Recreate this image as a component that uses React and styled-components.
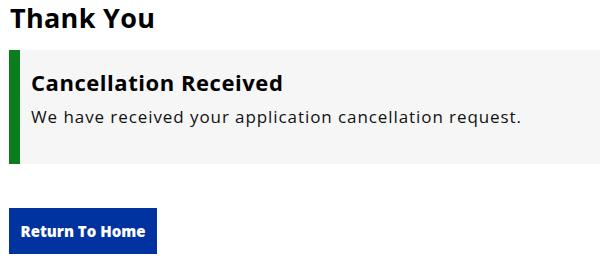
import React from "react";
import styled, { createGlobalStyle } from "styled-components";

const GlobalStyle = createGlobalStyle`
  body {
    margin: 0;
    background: #fff;
    font-family: "Open Sans", "Liberation Sans", sans-serif;
    color: #000;
  }
`;

const Page = styled.main`
  padding: 0 3px 0 9px;
`;

const Title = styled.h1`
  margin: 0;
  padding-top: 1px;
  font-size: 27px;
  line-height: 34px;
  font-weight: 700;
  letter-spacing: 0.3px;
  padding-left: 1px;
`;

const Notice = styled.section`
  margin-top: 15px;
  height: 114px;
  box-sizing: border-box;
  background: #f6f6f6;
  border-left: 11px solid #0b7d1f;
  padding: 18px 0 0 11px;
`;

const NoticeHeading = styled.h2`
  margin: 0;
  font-size: 22px;
  line-height: 28px;
  font-weight: 700;
  letter-spacing: 0.55px;
`;

const NoticeText = styled.p`
  margin: 10px 0 0;
  font-size: 17px;
  line-height: 22px;
  color: #111;
  letter-spacing: 0.92px;
`;

const HomeButton = styled.button`
  margin-top: 44px;
  width: 148px;
  height: 46px;
  border: 0;
  background: #0033a0;
  color: #fff;
  font-family: inherit;
  font-size: 15px;
  font-weight: 800;
  cursor: pointer;
  padding: 0;
  display: block;
`;

export default function App() {
  return (
    <Page>
      <GlobalStyle />
      <Title>Thank You</Title>
      <Notice>
        <NoticeHeading>Cancellation Received</NoticeHeading>
        <NoticeText>
          We have received your application cancellation request.
        </NoticeText>
      </Notice>
      <HomeButton>Return To Home</HomeButton>
    </Page>
  );
}
